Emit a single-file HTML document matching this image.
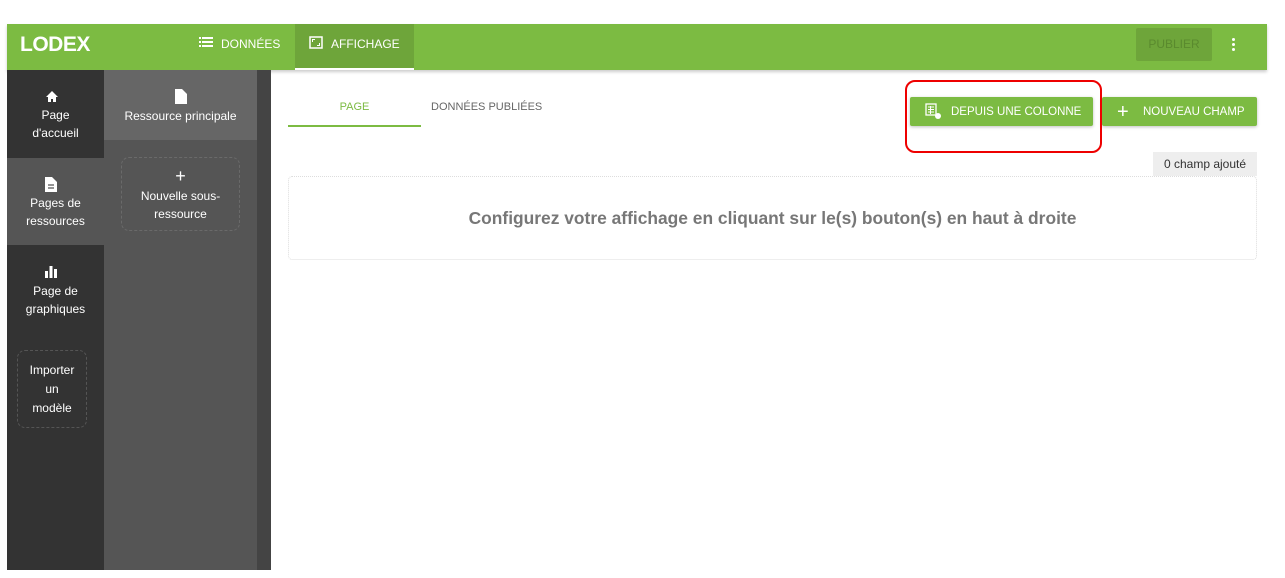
<!DOCTYPE html>
<html><head><meta charset="utf-8"><style>
*{margin:0;padding:0;box-sizing:border-box}
body{width:1285px;height:578px;background:#fff;font-family:"Liberation Sans",sans-serif;position:relative;overflow:hidden}
.a{position:absolute}
.c{text-align:center;color:#fff;font-size:12px;line-height:18px}
</style></head><body>
<div class="a" style="left:7px;top:24px;width:1260px;height:46px;background:#7cbb42;box-shadow:0 2px 3px rgba(0,0,0,.2)"></div>
<div class="a" style="left:20px;top:33px;color:#fff;font-weight:bold;font-size:21px;letter-spacing:-0.5px">LODEX</div>
<svg class="a" style="left:199px;top:37px" width="14" height="12"><rect x="0" y="0" width="2" height="2" fill="#fff"/><rect x="3" y="0" width="11" height="2" fill="#fff"/><rect x="0" y="4" width="2" height="2" fill="#fff"/><rect x="3" y="4" width="11" height="2" fill="#fff"/><rect x="0" y="8" width="2" height="2" fill="#fff"/><rect x="3" y="8" width="11" height="2" fill="#fff"/></svg>
<div class="a" style="left:221px;top:37px;color:#fff;font-size:12px">DONNÉES</div>
<div class="a" style="left:295px;top:24px;width:119px;height:46px;background:#6ea53a;border-bottom:2px solid #fff"></div>
<svg class="a" style="left:309px;top:36px" width="14" height="13"><rect x="1" y="1" width="12" height="11" fill="none" stroke="#fff" stroke-width="1.5"/><path d="M3.5 6V3.5H6M10.5 7v2.5H8" stroke="#fff" fill="none"/></svg>
<div class="a" style="left:331px;top:37px;color:#fff;font-size:12px">AFFICHAGE</div>
<div class="a" style="left:1136px;top:28px;width:76px;height:33px;background:#6ea53a;border-radius:2px;color:#5a8a2e;font-size:12px;text-align:center;line-height:33px">PUBLIER</div>
<div class="a" style="left:1232px;top:38px;width:3px;height:3px;background:#fff;border-radius:50%;box-shadow:0 5px 0 #fff,0 10px 0 #fff"></div>
<div class="a" style="left:7px;top:70px;width:97px;height:500px;background:#333"></div>
<div class="a" style="left:7px;top:158px;width:97px;height:87px;background:#555"></div>
<div class="a" style="left:104px;top:70px;width:153px;height:500px;background:#555"></div>
<div class="a" style="left:104px;top:70px;width:153px;height:70px;background:#666"></div>
<div class="a" style="left:257px;top:70px;width:14px;height:500px;background:#444"></div>
<svg class="a" style="left:45px;top:90px" width="14" height="13"><path d="M7 1L1 7h2v5h3V9h2v3h3V7h2z" fill="#fff"/></svg>
<div class="a c" style="left:7px;top:106px;width:97px">Page<br>d'accueil</div>
<svg class="a" style="left:45px;top:177px" width="12" height="15"><path d="M0 0h7l5 5v10H0z" fill="#fff"/><path d="M3 8h6M3 11h6" stroke="#555" stroke-width="1.3"/></svg>
<div class="a c" style="left:7px;top:194px;width:97px">Pages de<br>ressources</div>
<svg class="a" style="left:45px;top:265px" width="13" height="13"><rect x="0" y="6" width="3" height="7" fill="#fff"/><rect x="4.5" y="1" width="3" height="12" fill="#fff"/><rect x="9" y="4" width="3" height="9" fill="#fff"/></svg>
<div class="a c" style="left:7px;top:282px;width:97px">Page de<br>graphiques</div>
<div class="a c" style="left:17px;top:350px;width:70px;height:78px;border:1.5px dashed #555;border-radius:8px;padding-top:10px;line-height:19px">Importer<br>un<br>modèle</div>
<svg class="a" style="left:175px;top:89px" width="12" height="15"><path d="M0 0h7l5 5v10H0z" fill="#fff"/></svg>
<div class="a c" style="left:104px;top:107px;width:153px">Ressource principale</div>
<div class="a c" style="left:121px;top:157px;width:119px;height:74px;border:1.5px dashed #6a6a6a;border-radius:8px;padding-top:10px"><span style="font-size:18px;line-height:16px">+</span><br>Nouvelle sous-<br>ressource</div>
<div class="a" style="left:288px;top:101px;width:133px;text-align:center;color:#7cbb42;font-size:11px">PAGE</div>
<div class="a" style="left:288px;top:125px;width:133px;height:2px;background:#7cbb42"></div>
<div class="a" style="left:431px;top:101px;color:#666;font-size:11px">DONNÉES PUBLIÉES</div>
<div class="a" style="left:910px;top:97px;width:183px;height:29px;background:#7cbb42;border-radius:2px;box-shadow:0 1px 3px rgba(0,0,0,.25);color:#fff;font-size:11.5px;line-height:30px;padding-left:41px">DEPUIS UNE COLONNE</div>
<svg class="a" style="left:925px;top:103px" width="17" height="17"><rect x="1" y="1" width="10" height="11" fill="none" stroke="#fff" stroke-width="1.3"/><path d="M3 4h6M3 6.5h6M3 9h6M5.5 3v8" stroke="#fff" stroke-width="1"/><circle cx="13" cy="13" r="3" fill="#fff"/></svg>
<div class="a" style="left:1102px;top:97px;width:155px;height:29px;background:#7cbb42;border-radius:2px;box-shadow:0 1px 3px rgba(0,0,0,.25);color:#fff;font-size:11.5px;line-height:30px;padding-left:41px">NOUVEAU CHAMP</div>
<div class="a" style="left:1117px;top:100px;color:#fff;font-size:20px;line-height:24px">+</div>
<div class="a" style="left:905px;top:80px;width:197px;height:73px;border:2px solid #e00;border-radius:10px"></div>
<div class="a" style="left:1153px;top:152px;width:104px;height:24px;background:#eee;color:#333;font-size:12px;line-height:24px;text-align:center">0 champ ajouté</div>
<div class="a" style="left:288px;top:176px;width:969px;height:84px;border:1px dotted #ddd;border-radius:4px;text-align:center;line-height:82px;color:#777;font-weight:bold;font-size:17.4px">Configurez votre affichage en cliquant sur le(s) bouton(s) en haut à droite</div>
</body></html>
